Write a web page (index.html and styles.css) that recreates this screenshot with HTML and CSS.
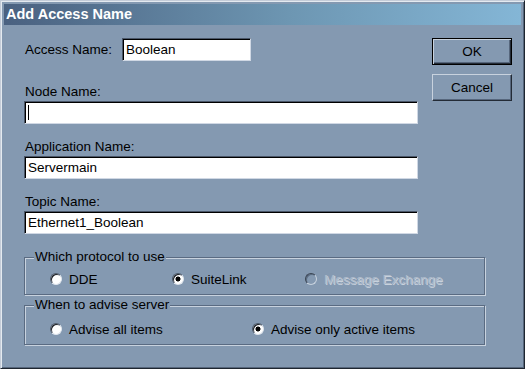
FILE: index.html
```html
<!DOCTYPE html>
<html lang="en">
<head>
    <meta charset="UTF-8">
    <title>Add Access Name</title>
    <link rel="stylesheet" href="styles.css">
</head>
<body>
    <!-- 대화상자 창 -->
    <div class="window">
        <div class="titlebar">Add Access Name</div>
        <div class="content">
            <div class="top">
                <div class="fields">
                    <div class="access-row">
                        <label class="access-label" for="AccessName">Access Name:</label>
                        <input type="text" id="AccessName" class="textbox short" value="Boolean">
                    </div>

                    <label class="field-label" for="NodeName">Node Name:</label>
                    <div class="textbox caret-box"><span class="caret"></span></div>

                    <label class="field-label" for="AppName">Application Name:</label>
                    <input type="text" id="AppName" class="textbox" value="Servermain">

                    <label class="field-label" for="TopicName">Topic Name:</label>
                    <input type="text" id="TopicName" class="textbox last" value="Ethernet1_Boolean">
                </div>
                <div class="buttons">
                    <button type="button" class="btn default">OK</button>
                    <button type="button" class="btn">Cancel</button>
                </div>
            </div>

            <fieldset class="group protocol">
                <legend>Which protocol to use</legend>
                <div class="choices three">
                    <label class="choice"><input type="radio" name="Protocol" class="radio"> DDE</label>
                    <label class="choice"><input type="radio" name="Protocol" class="radio" checked> SuiteLink</label>
                    <label class="choice disabled"><input type="radio" name="Protocol" class="radio" disabled> Message Exchange</label>
                </div>
            </fieldset>

            <fieldset class="group advise">
                <legend>When to advise server</legend>
                <div class="choices two">
                    <label class="choice"><input type="radio" name="Advise" class="radio"> Advise all items</label>
                    <label class="choice"><input type="radio" name="Advise" class="radio" checked> Advise only active items</label>
                </div>
            </fieldset>
        </div>
    </div>
</body>
</html>
```

FILE: styles.css
```css
body {
    margin: 0;
    font-family: "Liberation Sans", Arial, sans-serif;
    font-size: 13.5px;
    background-color: #8499b1;
}

.window {
    width: 525px;
    height: 369px;
    box-sizing: border-box;
    padding: 2px;
    background-color: #8499b1;
    border: 1px solid;
    border-color: #c4ccd8 #1e2630 #1e2630 #c4ccd8;
    box-shadow: inset 1px 1px 0 #e4eaf0, inset -1px -1px 0 #56667c;
}

.titlebar {
    height: 21px;
    margin: 1px;
    padding-left: 2px;
    line-height: 21px;
    font-size: 14.5px;
    font-weight: bold;
    color: #ffffff;
    background: linear-gradient(to right, #4a6180, #6d96b2 55%, #84b6d6);
}

.content {
    padding: 12px 0 0 21px;
}

.top {
    display: flex;
}

.fields {
    width: 394px;
    display: flex;
    flex-direction: column;
}

.access-row {
    display: flex;
    align-items: center;
    margin-bottom: 23px;
}

.access-label {
    width: 97px;
    padding-left: 1px;
}

.field-label {
    display: block;
    height: 16px;
    line-height: 16px;
    margin-bottom: 1px;
    padding-left: 1px;
}

.textbox {
    box-sizing: border-box;
    height: 23px;
    width: 394px;
    margin: 0 0 15px 0;
    padding: 0 0 0 3px;
    font-family: inherit;
    font-size: 13.5px;
    color: #000;
    background-color: #ffffff;
    border: 1px solid;
    border-color: #4a5668 #d0d8e4 #d0d8e4 #4a5668;
    box-shadow: inset 1px 1px 0 #000;
    outline: none;
}

.textbox.short {
    width: 129px;
    margin: 0;
}

.textbox.last {
    margin-bottom: 15px;
}

.caret-box {
    display: flex;
    align-items: center;
}

.caret {
    width: 1px;
    height: 15px;
    background-color: #000;
}

.buttons {
    display: flex;
    flex-direction: column;
    gap: 9px;
    margin-left: 14px;
}

.btn {
    width: 80px;
    height: 27px;
    padding: 0;
    font-family: inherit;
    font-size: 13.5px;
    color: #000;
    background-color: #8499b1;
    border: 1px solid;
    border-color: #c8d2de #232b36 #232b36 #c8d2de;
    box-shadow: inset -1px -1px 0 #56667c;
}

.btn.default {
    border: 1px solid #000;
    box-shadow: inset 1px 1px 0 #c8d2de, inset -1px -1px 0 #232b36, inset -2px -2px 0 #56667c;
}

.group {
    margin: 0;
    width: 461px;
    box-sizing: border-box;
    padding: 6px 0 7px 25px;
    border: 1px solid #5a6b82;
    box-shadow: inset 1px 1px 0 #c8d2de, 1px 1px 0 #c8d2de;
    min-width: 0;
}

.group legend {
    margin-left: -16px;
    padding: 0 1px;
    line-height: 16px;
    background-color: #8499b1;
}

.group.advise {
    margin-top: 2px;
    padding-top: 8px;
}

.choices {
    display: grid;
    align-items: center;
}

.choices.three {
    grid-template-columns: 122px 133px auto;
}

.choices.two {
    grid-template-columns: 202px auto;
}

.choice {
    display: flex;
    align-items: center;
    height: 16px;
    gap: 7px;
}

.radio {
    appearance: none;
    -webkit-appearance: none;
    margin: 0;
    width: 12px;
    height: 12px;
    box-sizing: border-box;
    border-radius: 50%;
    border: 1px solid;
    border-color: #4c5868 #e0e6ee #e0e6ee #4c5868;
    box-shadow: inset 1px 1px 0 #1a1e24;
    background-color: #ffffff;
}

.radio:checked {
    background: radial-gradient(circle, #000 2.2px, #ffffff 2.8px);
}

.disabled {
    color: #aebbcb;
    text-shadow: 1px 1px 0 #c9d2dd;
}

.radio:disabled {
    background-color: #8499b1;
    border-color: #3a4452 #c8d2de #c8d2de #3a4452;
    box-shadow: inset 1px 1px 0 #5a6b82;
}
```
